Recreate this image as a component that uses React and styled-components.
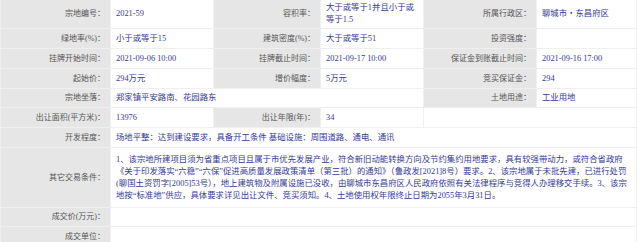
import React from "react";
import styled, { createGlobalStyle } from "styled-components";

const Global = createGlobalStyle`
  html, body { margin: 0; padding: 0; background: #fff; }
  body { overflow: hidden; }
`;

const Table = styled.table`
  width: 636px;
  border-collapse: collapse;
  table-layout: fixed;
  font-family: "Liberation Serif", "Noto Sans CJK SC", serif;
  margin-top: -1px;
`;

const Row = styled.tr`
  height: ${(p) => p.$h || 20}px;
`;

const Cell = styled.td`
  border: 1px solid #efefef;
  line-height: 12px;
  vertical-align: middle;
  padding: ${(p) => p.$pad || 0}px 5px;
`;

const Label = styled(Cell)`
  background: #e6e6e6;
  color: #555;
  text-align: right;
  font-size: 8px;
  white-space: nowrap;
`;

const Value = styled(Cell)`
  background: #fff;
  color: #343a99;
  font-size: 8.4px;
  text-align: left;
  word-break: break-all;
`;

const cols = [110, 103, 107, 103, 113, 100];

const otherText =
  "1、该宗地所建项目须为省重点项目且属于市优先发展产业，符合新旧动能转换方向及节约集约用地要求，具有较强带动力，或符合省政府《关于印发落实\u201c六稳\u201d\u201c六保\u201d促进高质量发展政策清单（第三批）的通知》（鲁政发[2021]8号）要求。2、该宗地属于未批先建，已进行处罚(聊国土资罚字[2005]53号），地上建筑物及附属设施已没收，由聊城市东昌府区人民政府依照有关法律程序与竞得人办理移交手续。3、该宗地按\u201c标准地\u201d供应，具体要求详见出让文件、竞买须知。4、土地使用权年限终止日期为2055年3月31日。";

export default function App() {
  return (
    <>
      <Global />
      <Table>
        <colgroup>
          {cols.map((w, i) => (
            <col key={i} style={{ width: w }} />
          ))}
        </colgroup>
        <tbody>
          <Row $h={29}>
            <Label>宗地编号：</Label>
            <Value>2021-59</Value>
            <Label>容积率：</Label>
            <Value>大于或等于1并且小于或等于1.5</Value>
            <Label>所属行政区：</Label>
            <Value>聊城市・东昌府区</Value>
          </Row>
          <Row>
            <Label>绿地率(%)：</Label>
            <Value>小于或等于15</Value>
            <Label>建筑密度(%)：</Label>
            <Value>大于或等于51</Value>
            <Label>投资强度：</Label>
            <Value></Value>
          </Row>
          <Row>
            <Label>挂牌开始时间：</Label>
            <Value>2021-09-06 10:00</Value>
            <Label>挂牌截止时间：</Label>
            <Value>2021-09-17 10:00</Value>
            <Label>保证金到账截止时间：</Label>
            <Value>2021-09-16 17:00</Value>
          </Row>
          <Row>
            <Label>起始价：</Label>
            <Value>294万元</Value>
            <Label>增价幅度：</Label>
            <Value>5万元</Value>
            <Label>竞买保证金：</Label>
            <Value>294</Value>
          </Row>
          <Row $h={19}>
            <Label>宗地坐落：</Label>
            <Value colSpan={3}>郑家镇平安路南、花园路东</Value>
            <Label>土地用途：</Label>
            <Value>工业用地</Value>
          </Row>
          <Row>
            <Label>出让面积(平方米)：</Label>
            <Value>13976</Value>
            <Label>出让年限(年)：</Label>
            <Value>34</Value>
            <Value colSpan={2}></Value>
          </Row>
          <Row>
            <Label>开发程度：</Label>
            <Value colSpan={5}>场地平整：达到建设要求，具备开工条件 基础设施：周围道路、通电、通讯</Value>
          </Row>
          <Row $h={60}>
            <Label>其它交易条件：</Label>
            <Value colSpan={5} $pad={5}>{otherText}</Value>
          </Row>
          <Row $h={19}>
            <Label>成交价(万元)：</Label>
            <Value colSpan={5}></Value>
          </Row>
          <Row>
            <Label>成交单位：</Label>
            <Value colSpan={5}></Value>
          </Row>
        </tbody>
      </Table>
    </>
  );
}
